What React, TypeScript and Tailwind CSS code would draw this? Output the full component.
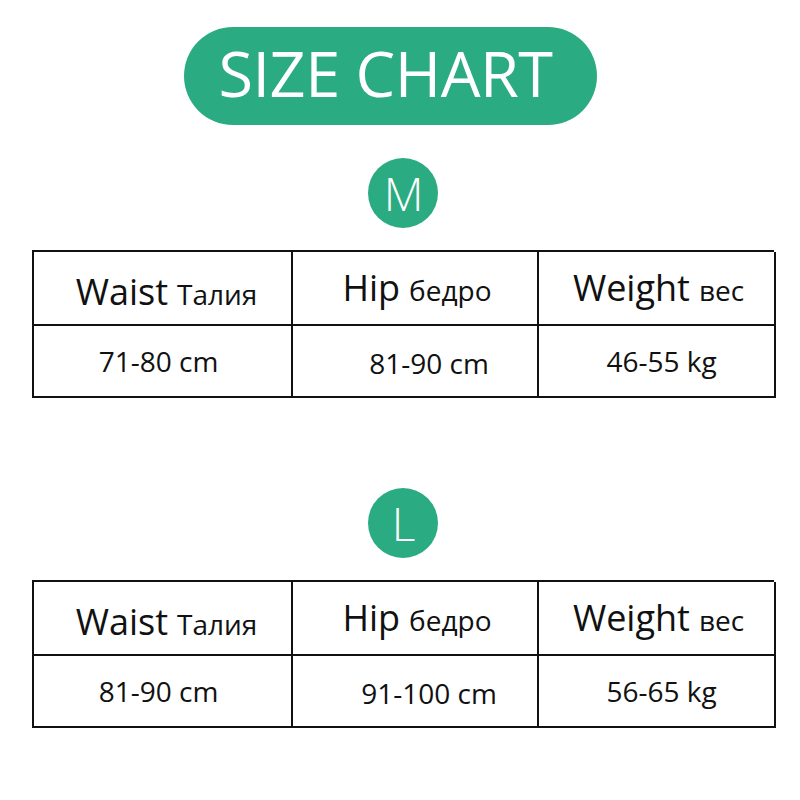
const green = 'bg-[#2bab82]';

type Row = { waist: string; hip: string; weight: string };

function SizeCircle({ letter }: { letter: string }) {
  return (
    <div className={`mx-auto flex h-[70px] w-[70px] items-center justify-center rounded-full ${green} pl-[1px]`}>
      <span className="text-[46px] font-light leading-none text-white">{letter}</span>
    </div>
  );
}

function SizeTable({ row }: { row: Row }) {
  return (
    <div className="ml-[32px] grid w-[742px] grid-cols-[259px_246px_237px] border-l-2 border-t-2 border-[#111] text-[#111]">
      <div className="flex h-[74px] items-center justify-center border-b-2 border-r-2 border-[#111] pl-[8px] pt-[8px]">
        <span className="flex items-baseline leading-none">
          <span className="text-[36px]">Waist</span>
          <span className="ml-[9px] text-[28px]">Талия</span>
        </span>
      </div>
      <div className="flex h-[74px] items-center justify-center border-b-2 border-r-2 border-[#111] pl-[4px]">
        <span className="flex items-baseline leading-none">
          <span className="text-[36px]">Hip</span>
          <span className="ml-[9px] text-[28px]">бедро</span>
        </span>
      </div>
      <div className="flex h-[74px] items-center justify-center border-b-2 border-r-2 border-[#111] pl-[4px]">
        <span className="flex items-baseline leading-none">
          <span className="text-[36px]">Weight</span>
          <span className="ml-[9px] text-[28px]">вес</span>
        </span>
      </div>
      <div className="flex h-[72px] items-center justify-center border-b-2 border-r-2 border-[#111] pr-[8px]">
        <span className="text-[28px] leading-none">{row.waist}</span>
      </div>
      <div className="flex h-[72px] items-center justify-center border-b-2 border-r-2 border-[#111] pl-[28px] pt-[4px]">
        <span className="text-[28px] leading-none">{row.hip}</span>
      </div>
      <div className="flex h-[72px] items-center justify-center border-b-2 border-r-2 border-[#111] pl-[10px]">
        <span className="text-[28px] leading-none">{row.weight}</span>
      </div>
    </div>
  );
}

export default function App() {
  return (
    <div className="h-[800px] w-[800px] overflow-hidden bg-white pt-[27px] font-['Open_Sans','Noto_Sans',sans-serif]">
      <div className={`ml-[184px] flex h-[98px] w-[413px] items-center justify-center rounded-full ${green} pb-[8px] pr-[10px]`}>
        <span className="text-[63px] leading-none tracking-[-0.5px] text-white">SIZE CHART</span>
      </div>

      <div className="mt-[33px] pl-[6px]">
        <SizeCircle letter="M" />
      </div>
      <div className="mt-[22px]">
        <SizeTable row={{ waist: '71-80 cm', hip: '81-90 cm', weight: '46-55 kg' }} />
      </div>

      <div className="mt-[90px] pl-[6px]">
        <SizeCircle letter="L" />
      </div>
      <div className="mt-[22px]">
        <SizeTable row={{ waist: '81-90 cm', hip: '91-100 cm', weight: '56-65 kg' }} />
      </div>
    </div>
  );
}
